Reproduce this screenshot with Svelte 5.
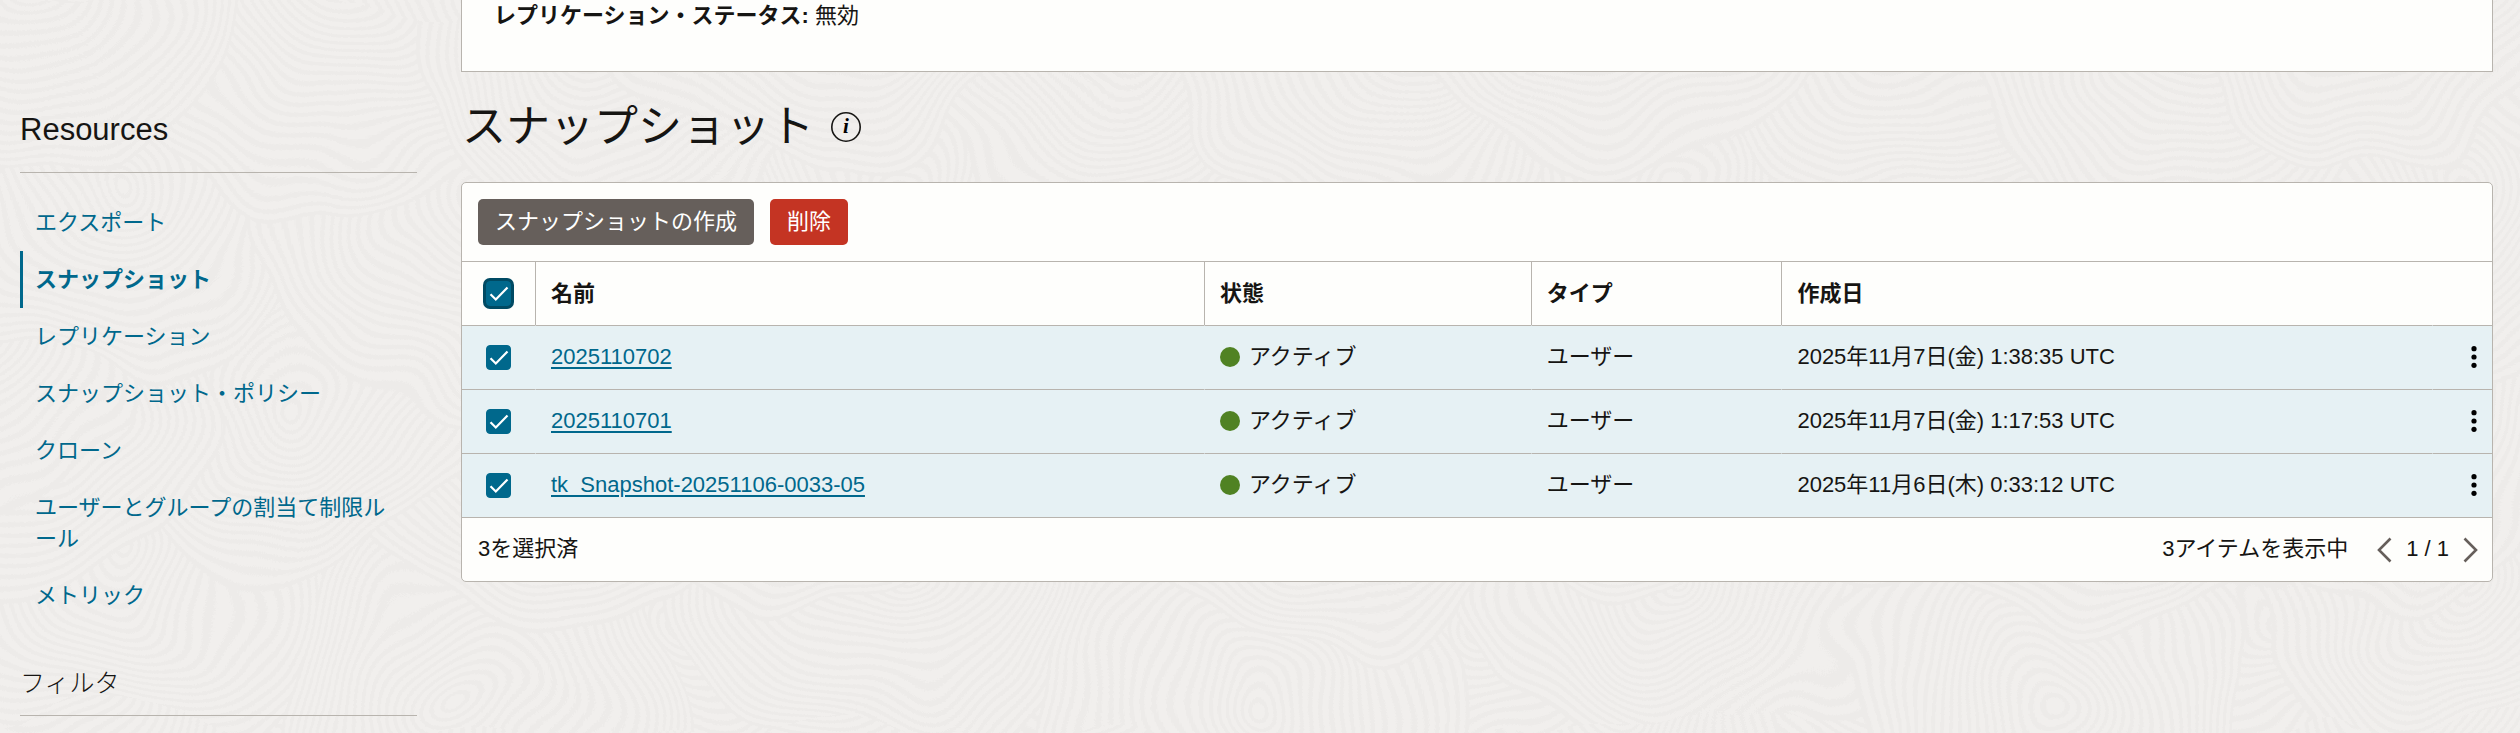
<script>
  const resources = [
    { label: 'エクスポート' },
    { label: 'スナップショット', active: true },
    { label: 'レプリケーション' },
    { label: 'スナップショット・ポリシー' },
    { label: 'クローン' },
    { label: 'ユーザーとグループの割当て制限ルール' },
    { label: 'メトリック' }
  ];

  let snapshots = $state([
    { name: '2025110702', created: '2025年11月7日(金) 1:38:35 UTC', selected: true },
    { name: '2025110701', created: '2025年11月7日(金) 1:17:53 UTC', selected: true },
    { name: 'tk_Snapshot-20251106-0033-05', created: '2025年11月6日(木) 0:33:12 UTC', selected: true }
  ]);

  let selectedCount = $derived(snapshots.filter((s) => s.selected).length);
  let allSelected = $derived(selectedCount === snapshots.length);

  function toggleAll(event) {
    const checked = event.currentTarget.checked;
    snapshots.forEach((s) => (s.selected = checked));
  }

  // background texture: stacked discs of concentric rings, later ones cover earlier ones
  const discs = [
    [310, 565, 190], [700, 628, 200], [115, 565, 210], [480, 700, 200],
    [560, 420, 220], [290, 380, 200], [20, 400, 190], [700, 300, 220],
    [110, 180, 200], [470, 200, 210], [330, -20, 230], [620, 20, 220], [40, -30, 200]
  ];
  const rings = (r) => Array.from({ length: Math.floor(r / 10) }, (_, i) => r - i * 10);
</script>

<div class="page" lang="ja">
  <svg class="texture" aria-hidden="true">
    <defs>
      <filter id="wobble" x="0" y="0" width="100%" height="100%">
        <feTurbulence type="fractalNoise" baseFrequency="0.006" numOctaves="2" seed="4" />
        <feDisplacementMap in="SourceGraphic" scale="110" xChannelSelector="R" yChannelSelector="G" />
      </filter>
      <pattern id="swirl" width="780" height="733" patternUnits="userSpaceOnUse">
        {#each discs as [cx, cy, r]}
          {#each [-780, 0, 780] as dx}
            {#each rings(r) as radius}
              <circle cx={cx + dx} {cy} r={radius} />
            {/each}
          {/each}
        {/each}
      </pattern>
    </defs>
    <rect x="-5%" y="-10%" width="110%" height="120%" fill="url(#swirl)" filter="url(#wobble)" />
  </svg>

  <aside>
    <h2>Resources</h2>
    <nav>
      {#each resources as item}
        <a href="#resource" class:active={item.active}>{item.label}</a>
      {/each}
    </nav>
    <h3>フィルタ</h3>
  </aside>

  <main>
    <section class="details">
      <b>レプリケーション・ステータス:</b> 無効
    </section>

    <div class="title">
      <h1>スナップショット</h1>
      <button class="icon" aria-label="情報">
        <svg width="32" height="32" viewBox="0 0 32 32">
          <circle cx="16" cy="16" r="14.2" fill="none" stroke="#161513" stroke-width="1.6" />
          <text x="16" y="22" text-anchor="middle">i</text>
        </svg>
      </button>
    </div>

    <section class="card">
      <div class="toolbar">
        <button class="btn">スナップショットの作成</button>
        <button class="btn danger">削除</button>
      </div>

      <table>
        <colgroup>
          <col class="col-check" />
          <col class="col-name" />
          <col class="col-state" />
          <col class="col-type" />
          <col />
          <col class="col-menu" />
        </colgroup>
        <thead>
          <tr>
            <th class="check"><input type="checkbox" class="ring" aria-label="すべて選択" checked={allSelected} onchange={toggleAll} /></th>
            <th>名前</th>
            <th>状態</th>
            <th>タイプ</th>
            <th colspan="2">作成日</th>
          </tr>
        </thead>
        <tbody>
          {#each snapshots as snapshot}
            <tr class:selected={snapshot.selected}>
              <td class="check"><input type="checkbox" aria-label={snapshot.name} bind:checked={snapshot.selected} /></td>
              <td><a href="#snapshot">{snapshot.name}</a></td>
              <td><span class="state"><i class="dot"></i>アクティブ</span></td>
              <td>ユーザー</td>
              <td>{snapshot.created}</td>
              <td class="menu">
                <button class="icon" aria-label="アクション">
                  <svg width="8" height="24" viewBox="0 0 8 24">
                    <circle cx="4" cy="3.7" r="2.6" />
                    <circle cx="4" cy="12" r="2.6" />
                    <circle cx="4" cy="20.3" r="2.6" />
                  </svg>
                </button>
              </td>
            </tr>
          {/each}
        </tbody>
      </table>

      <footer>
        <span class="label">{selectedCount}を選択済</span>
        <div class="pager">
          <span class="label total">{snapshots.length}アイテムを表示中</span>
          <button class="icon" aria-label="前のページ">
            <svg width="16" height="26" viewBox="0 0 16 26"><path d="M14.5 1.5 3 13l11.5 11.5" /></svg>
          </button>
          <span class="label">1 / 1</span>
          <button class="icon" aria-label="次のページ">
            <svg width="16" height="26" viewBox="0 0 16 26"><path d="M1.5 1.5 13 13 1.5 24.5" /></svg>
          </button>
        </div>
      </footer>
    </section>
  </main>
</div>

<style>
  :global(body) {
    background: #f1efed;
  }

  .page {
    position: relative;
    display: grid;
    grid-template-columns: 397px minmax(0, 1fr);
    column-gap: 44px;
    box-sizing: border-box;
    min-height: 100vh;
    padding: 0 27px 0 20px;
    font-family: "Liberation Sans", "Noto Sans CJK JP", sans-serif;
    font-size: 22px;
    line-height: 30px;
    color: #161513;
  }

  .texture {
    position: absolute;
    inset: 0;
    width: 100%;
    height: 100%;
  }

  .texture circle {
    fill: #f1efed;
    stroke: #edebe9;
    stroke-width: 4;
  }

  aside, main {
    position: relative;
  }

  aside {
    padding-top: 108px;
  }

  h1, h2, h3 {
    margin: 0;
    font-weight: 400;
  }

  h2 {
    padding-bottom: 20px;
    border-bottom: 1px solid #b8b4ae;
    font-size: 31px;
    line-height: 44px;
  }

  h3 {
    padding-bottom: 18px;
    border-bottom: 1px solid #b8b4ae;
    font-family: "Noto Sans CJK JP", sans-serif;
    font-size: 25px;
    font-weight: 300;
    line-height: 32px;
  }

  nav {
    display: flex;
    flex-direction: column;
    padding: 21px 0 41px;
  }

  nav a {
    padding: 13px 15px 13px 12px;
    border-left: 3px solid transparent;
    line-height: 31px;
    line-break: loose;
    text-decoration: none;
  }

  nav a.active {
    border-color: #00688c;
    font-weight: 700;
  }

  a {
    color: #00688c;
  }

  .details {
    padding: 1px 32px 40px;
    border: 1px solid #b8b4ae;
    border-top: 0;
    background: #fefefc;
  }

  .title {
    display: flex;
    align-items: center;
    gap: 16px;
    padding: 27px 0 27px 1px;
  }

  h1 {
    font-size: 44px;
    line-height: 56px;
  }

  .title text {
    font-family: "Liberation Serif", serif;
    font-size: 21px;
    font-style: italic;
    font-weight: 700;
  }

  button {
    font: inherit;
    cursor: pointer;
  }

  .icon {
    display: flex;
    padding: 0;
    border: 0;
    background: none;
    color: inherit;
  }

  .card {
    border: 1px solid #b8b4ae;
    border-radius: 5px;
    background: #fefefc;
    overflow: hidden;
  }

  .toolbar {
    display: flex;
    gap: 16px;
    padding: 16px;
  }

  .btn {
    height: 46px;
    padding: 0 17px;
    border: 0;
    border-radius: 5px;
    background: #665f5b;
    color: #fff;
  }

  .danger {
    background: #c43423;
  }

  table {
    width: 100%;
    table-layout: fixed;
    border-collapse: separate;
    border-spacing: 0;
  }

  .col-check {
    width: 73px;
  }

  .col-name {
    width: 32.95%;
  }

  .col-state {
    width: 16.1%;
  }

  .col-type {
    width: 12.35%;
  }

  .col-menu {
    width: 60px;
  }

  th, td {
    box-sizing: border-box;
    height: 64px;
    padding: 0 15px;
    border-top: 1px solid #b8b4ae;
    text-align: left;
  }

  td {
    padding-bottom: 2px;
  }

  th + th {
    border-left: 1px solid #b8b4ae;
  }

  td + td {
    border-left: 1px solid transparent;
  }

  .selected td {
    background: #e6f1f4;
  }

  td a {
    text-decoration-thickness: 2px;
    text-underline-offset: 3px;
  }

  .check {
    padding: 0 0 0 24px;
  }

  .check input {
    display: block;
    appearance: none;
    width: 25px;
    height: 25px;
    margin: 0;
    border: 1px solid #00688c;
    border-radius: 4px;
  }

  .check input:checked {
    background: #00688c url("data:image/svg+xml,%3Csvg xmlns='http://www.w3.org/2000/svg' viewBox='0 0 25 25'%3E%3Cpath d='M4.5 13.2l5.3 5.3L21.5 6.5' fill='none' stroke='%23fff' stroke-width='2.2'/%3E%3C/svg%3E") border-box center / 25px;
  }

  .check .ring {
    box-shadow: 0 0 0 3px #004a63;
  }

  .state {
    display: flex;
    align-items: center;
    gap: 9px;
  }

  .dot {
    width: 20px;
    height: 20px;
    border-radius: 50%;
    background: #508223;
  }

  td.menu {
    padding: 0 14px 2px 0;
  }

  .menu .icon {
    margin-left: auto;
  }

  footer {
    display: flex;
    align-items: center;
    justify-content: space-between;
    height: 63px;
    padding: 0 13px 0 16px;
    border-top: 1px solid #b8b4ae;
  }

  .label {
    padding-bottom: 2px;
  }

  .pager {
    display: flex;
    align-items: center;
    gap: 14px;
  }

  .total {
    margin-right: 14px;
  }

  .pager path {
    fill: none;
    stroke: #665f5b;
    stroke-width: 2.6;
  }
</style>
